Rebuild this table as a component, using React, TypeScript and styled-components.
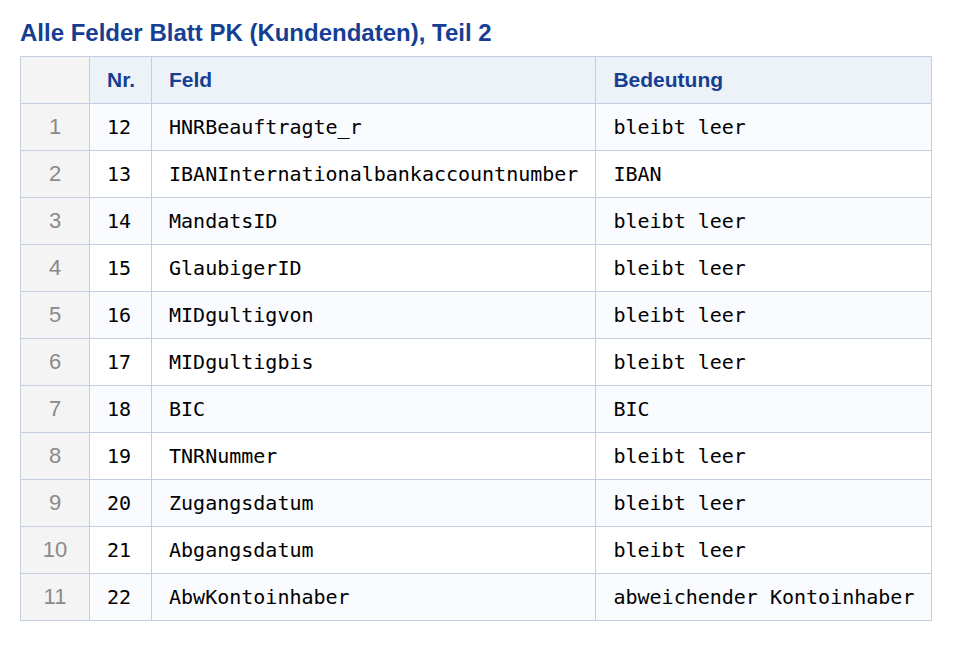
import { ReactElement } from 'react';
import styled, { createGlobalStyle } from 'styled-components';

interface IFieldRow {
  nr: number;
  feld: string;
  bedeutung: string;
}

const rows: IFieldRow[] = [
  { nr: 12, feld: 'HNRBeauftragte_r', bedeutung: 'bleibt leer' },
  { nr: 13, feld: 'IBANInternationalbankaccountnumber', bedeutung: 'IBAN' },
  { nr: 14, feld: 'MandatsID', bedeutung: 'bleibt leer' },
  { nr: 15, feld: 'GlaubigerID', bedeutung: 'bleibt leer' },
  { nr: 16, feld: 'MIDgultigvon', bedeutung: 'bleibt leer' },
  { nr: 17, feld: 'MIDgultigbis', bedeutung: 'bleibt leer' },
  { nr: 18, feld: 'BIC', bedeutung: 'BIC' },
  { nr: 19, feld: 'TNRNummer', bedeutung: 'bleibt leer' },
  { nr: 20, feld: 'Zugangsdatum', bedeutung: 'bleibt leer' },
  { nr: 21, feld: 'Abgangsdatum', bedeutung: 'bleibt leer' },
  { nr: 22, feld: 'AbwKontoinhaber', bedeutung: 'abweichender Kontoinhaber' },
];

const GlobalStyle = createGlobalStyle`
  html, body {
    margin: 0;
    padding: 0;
    background: #ffffff;
  }
`;

const App = (): ReactElement => {
  return (
    <>
      <GlobalStyle />
      <Page>
        <Title>Alle Felder Blatt PK (Kundendaten), Teil 2</Title>
        <Table>
          <thead>
            <tr>
              <ObsHeader />
              <HeaderCell>Nr.</HeaderCell>
              <HeaderCell>Feld</HeaderCell>
              <HeaderCell>Bedeutung</HeaderCell>
            </tr>
          </thead>
          <tbody>
            {rows.map((row, index) => (
              <Row key={row.nr} $odd={index % 2 === 0}>
                <ObsCell>{index + 1}</ObsCell>
                <DataCell>{row.nr}</DataCell>
                <DataCell>{row.feld}</DataCell>
                <DataCell>{row.bedeutung}</DataCell>
              </Row>
            ))}
          </tbody>
        </Table>
      </Page>
    </>
  );
};

export default App;

const Page = styled.div`
  padding: 19px 20px;
`;

const Title = styled.h2`
  margin: 0 0 9px;
  font-family: 'Liberation Sans', Arial, sans-serif;
  font-size: 24px;
  font-weight: bold;
  line-height: 28px;
  color: #163f93;
`;

const Table = styled.table`
  border-collapse: collapse;
  border: 1px solid #c5cde0;
`;

const HeaderCell = styled.th`
  padding: 11px 16px 11px 17px;
  line-height: 24px;
  border: 1px solid #c5cde0;
  background: #edf2f9;
  color: #163f93;
  font-family: 'Liberation Sans', Arial, sans-serif;
  font-size: 21px;
  font-weight: bold;
  text-align: left;
  white-space: nowrap;
`;

const ObsHeader = styled.th`
  width: 68px;
  padding: 0;
  border: 1px solid #c5cde0;
  background: #f4f4f4;
`;

const Row = styled.tr<{ $odd: boolean }>`
  background: ${(p) => (p.$odd ? '#f9fbff' : '#ffffff')};
`;

const ObsCell = styled.td`
  padding: 11px 0;
  line-height: 24px;
  border: 1px solid #c5cde0;
  background: #f4f4f4;
  color: #8a8a8a;
  font-family: 'Liberation Sans', Arial, sans-serif;
  font-size: 22px;
  text-align: center;
`;

const DataCell = styled.td`
  padding: 11px 17px;
  line-height: 24px;
  border: 1px solid #c5cde0;
  color: #000000;
  font-family: 'DejaVu Sans Mono', 'Liberation Mono', monospace;
  font-size: 20px;
  white-space: nowrap;
`;
